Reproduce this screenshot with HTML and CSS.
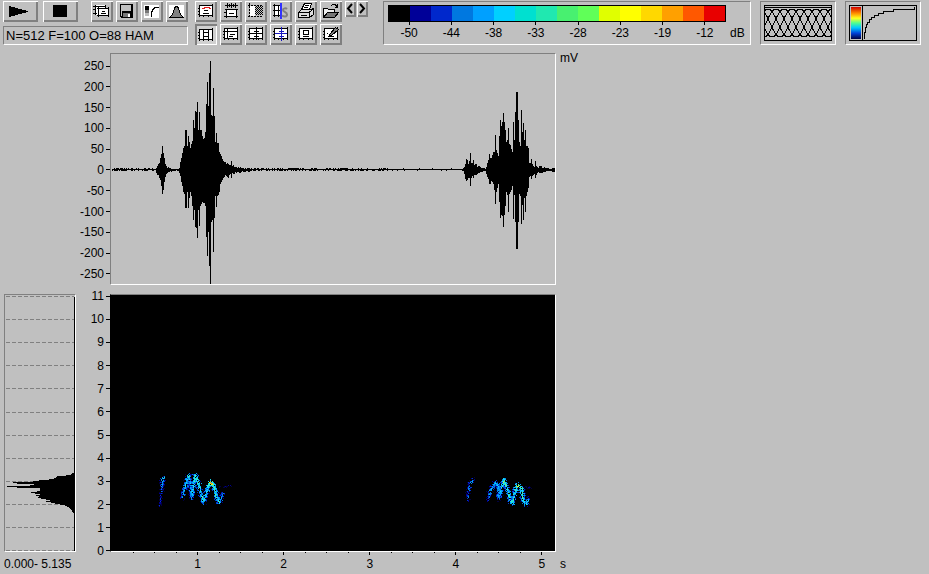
FILE: index.html
```html
<!DOCTYPE html>
<html lang="en">
<head>
<meta charset="utf-8">
<title>Sound analysis</title>
<link rel="stylesheet" href="styles.css">
</head>
<body>
<svg class="defs" aria-hidden="true">
  <defs>
    <g id="frame">
      <path d="M5 4h12v11H5z" fill="#fff"/>
      <path d="M4.500 4v12M17.500 3v13M4 4.500h14M4 14.500h14M3 7.500h1M3 10.500h1M3 13.500h1M8.500 15v1M13.500 15v1" stroke="#000" fill="none"/>
    </g>
  </defs>
</svg>

<header class="toolbar">
  <div class="left">
    <div class="row">
      <button class="wide" aria-label="Play"><svg viewBox="0 0 35 21"><path d="M6 5l19 5v1L6 16z"/></svg></button>
      <button class="wide" aria-label="Stop"><svg viewBox="0 0 35 21"><path d="M10 4h14v12H10z"/></svg></button>
      <div class="row files">
        <button aria-label="Copy"><svg viewBox="0 0 22 21"><path d="M4 4h11v10H4z" fill="#fff"/><path d="M2 5.500h13M4.500 4v10M2 8.500h2M2 12.500h4M14.500 4v3" class="k"/><path d="M7 7h11v8H7z" fill="#fff"/><path d="M6 7.500h12M7.500 6v10M6 14.500h12M17.500 6v10M10 12.500h5M11 10.500h3" class="k"/></svg></button>
        <button aria-label="Save"><svg viewBox="0 0 22 21"><path d="M4 3h13v14H5l-1-1z"/><path d="M6 4h9v6H6zM5 4h1v11H5z" fill="#c0c0c0"/><path d="M7 12h7v4H7z" fill="#777"/><path d="M12 13h2v3h-2z" fill="#fff"/></svg></button>
        <button aria-label="Transfer curve"><svg viewBox="0 0 22 21"><path d="M3 4h15v13H3z" fill="#fff"/><path d="M4 5h4v4H4z"/><path d="M4 9h4v3H4z" fill="#777"/><path d="M4 12h4v3H4z" fill="#bbb"/><path d="M10.500 16v-4l1-3 2-2 4-1" class="k"/></svg></button>
        <button aria-label="Window function"><svg viewBox="0 0 22 21"><path d="M3 4h15v13H3z" fill="#fff"/><path d="M3.500 16.500l3-3 2-6 1-2h2l1 2 2 6 3 3z" fill="#808080" stroke="#000"/></svg></button>
      </div>
    </div>
    <p class="status">N=512 F=100 O=88 HAM</p>
  </div>

  <div class="tools">
    <div class="row">
      <button aria-label="Spectrogram"><svg viewBox="0 0 22 21"><use href="#frame"/><path d="M7 7.500h2v-1h5v1h2" stroke="#e02020" fill="none"/><path d="M9 9.500h4M8 12.500h6" class="k"/></svg></button>
      <button aria-label="Waveform"><svg viewBox="0 0 22 21"><path d="M5 4.500h13M7.500 2v5M9.500 3v3M11.500 2v5M13.500 3v3M15.500 2v5" class="k"/><path d="M6 8h11v8H6z" fill="#fff"/><path d="M5 8.500h13M6.500 8v9M16.500 8v9M4 15.500h14M9 12.500h5M4 11.500h2" class="k"/></svg></button>
      <button aria-label="Selection"><svg viewBox="0 0 22 21"><path d="M5 5h5v10H5z" fill="#fff"/><path d="M3 4.500h15M4.500 2v15M3 15.500h15" class="k" stroke-dasharray="2 1"/><path d="M10 5h8v9h-8z" fill="url(#hatch)"/><defs><pattern id="hatch" width="2" height="2" patternUnits="userSpaceOnUse"><path d="M0 0h2v2H0z" fill="#c0c0c0"/><path d="M0 0h1v1H0zM1 1h1v1H1z"/></pattern></defs></svg></button>
      <button aria-label="Spectrum cursor"><svg viewBox="0 0 22 21"><path d="M4 4h7v11H4z" fill="#fff"/><path d="M3 4.500h8M4.500 3v13M3 9.500h8M3 14.500h8M8.500 4v12" class="k"/><path d="M11 2v16" stroke="#3030ff" stroke-width="2" fill="none"/><path d="M17 8c-1-1-4-1-4 1s4 2 4 4.500-3 2.500-5 1" stroke="#808080" stroke-width="2" fill="none" class="smooth"/></svg></button>
      <button aria-label="Print"><svg viewBox="0 0 22 21"><path d="M6.500 8.500l3-6h7l-2 6z" fill="#fff" stroke="#000"/><path d="M10 4.500h4M9 6.500h4" class="k"/><path d="M3.500 11.500l3-3h9l3-1v6l-4 3h-11z" fill="#ddd" stroke="#000"/><path d="M4 11.500h10l4-3M14.500 12v5M6 14.500h6" class="k"/></svg></button>
      <button aria-label="Open"><svg viewBox="0 0 22 21"><path d="M3.500 16.500v-9h4l1 1h6v3" fill="#eee" stroke="#000"/><path d="M3.500 16.500l4-5h11l-4 5z" fill="#777" stroke="#000"/><path d="M11 4.500l2-1h2l2 2M17.500 3v3h-3" class="k"/></svg></button>
      <button class="step first" aria-label="Previous"><svg viewBox="0 0 11 16"><path d="M7 3L3 7.500 7 12" class="arrow"/></svg></button>
      <button class="step" aria-label="Next"><svg viewBox="0 0 11 16"><path d="M3 3l4 4.500L3 12" class="arrow"/></svg></button>
    </div>
    <div class="row">
      <button class="pressed" aria-label="Vertical cursors" aria-pressed="true"><svg viewBox="0 0 22 21"><g transform="translate(0 1)"><use href="#frame"/><path d="M8.500 4v11M13.500 4v11M9 7.500h4M9 11.500h4" class="k"/></g></svg></button>
      <button aria-label="Horizontal cursor"><svg viewBox="0 0 22 21"><use href="#frame"/><path d="M5 7.500h13M7.500 4v11M10 10.500h5M9 12.500h4" class="k"/></svg></button>
      <button aria-label="Cross cursor"><svg viewBox="0 0 22 21"><use href="#frame"/><path d="M5 9.500h12M11.500 3v13M9 7.500h5M9 12.500h5" class="k"/></svg></button>
      <button aria-label="Harmonic cursor"><svg viewBox="0 0 22 21"><use href="#frame"/><path d="M5 9.500h12M11.500 3v14M9 7.500h5M9 12.500h5" stroke="#1818c0" fill="none"/></svg></button>
      <button aria-label="Box cursor"><svg viewBox="0 0 22 21"><use href="#frame"/><path d="M8.500 6.500h5v4h-5zM8 12.500h6" class="k"/></svg></button>
      <button aria-label="Draw"><svg viewBox="0 0 22 21"><use href="#frame"/><path d="M9.500 10.500l6-7 3 2-7 6h-2z" fill="#808080" stroke="#000"/><path d="M7 9.500h1M8 12.500h6" class="k"/></svg></button>
    </div>
  </div>

  <section class="panel scale" aria-label="Level scale">
    <div class="colors">
      <i class="c1"></i><i class="c2"></i><i class="c3"></i><i class="c4"></i><i class="c5"></i><i class="c6"></i><i class="c7"></i><i class="c8"></i><i class="c9"></i><i class="c10"></i><i class="c11"></i><i class="c12"></i><i class="c13"></i><i class="c14"></i><i class="c15"></i><i class="c16"></i>
    </div>
    <div class="levels"><span>-50</span><span>-44</span><span>-38</span><span>-33</span><span>-28</span><span>-23</span><span>-19</span><span>-12</span></div>
    <span class="unit">dB</span>
  </section>

  <div class="panel preview"><svg id="overlap" viewBox="0 0 68 36" role="img" aria-label="Window overlap"></svg></div>
  <div class="panel preview">
    <svg viewBox="0 0 68 36" role="img" aria-label="Color curve">
      <defs><linearGradient id="jet" x2="0" y2="1"><stop offset="0" stop-color="#d00000"/><stop offset=".2" stop-color="#ff9000"/><stop offset=".35" stop-color="#ffff20"/><stop offset=".5" stop-color="#50ff90"/><stop offset=".65" stop-color="#00c8ff"/><stop offset=".82" stop-color="#0040d8"/><stop offset="1" stop-color="#000040"/></linearGradient></defs>
      <path d="M2 2h10v32H2z" fill="url(#jet)"/>
      <path d="M13.500 1v34M15.500 34v-7h1v-5h1v-3h1v-2h2v-3h2v-2h3v-2h4v-2h5v-2h10v-2h21V2" class="k"/>
      <path d="M.5.5h67v35H.5z" class="k"/>
    </svg>
  </div>
</header>

<main class="charts">
  <div class="axis volts"><span>250</span><span>200</span><span>150</span><span>100</span><span>50</span><span>0</span><span>-50</span><span>-100</span><span>-150</span><span>-200</span><span>-250</span></div>
  <div class="plot wave"><svg id="wave" viewBox="0 0 444 230" preserveAspectRatio="none" role="img" aria-label="Waveform"></svg></div>
  <span class="wave-unit">mV</span>

  <div class="plot spectrum"><svg id="spectrum" viewBox="0 0 70 256" preserveAspectRatio="none" role="img" aria-label="Mean spectrum"></svg></div>
  <div class="axis khz"><span>11</span><span>10</span><span>9</span><span>8</span><span>7</span><span>6</span><span>5</span><span>4</span><span>3</span><span>2</span><span>1</span><span>0</span></div>
  <div class="plot sonogram"><svg id="sonogram" viewBox="0 0 444 256" preserveAspectRatio="none" role="img" aria-label="Spectrogram"></svg></div>

  <span class="range">0.000- 5.135</span>
  <div class="time">
    <svg id="ticks" viewBox="0 0 446 4" preserveAspectRatio="none" aria-hidden="true"></svg>
    <div class="seconds"><span>1</span><span>2</span><span>3</span><span>4</span><span>5</span></div>
  </div>
  <span class="time-unit">s</span>
</main>
<script src="charts.js"></script>
</body>
</html>
```
FILE: styles.css
```css
* { box-sizing: border-box; }
body {
  margin: 0;
  min-height: 100vh;
  display: flex;
  flex-direction: column;
  background: #c0c0c0;
  color: #000;
  font: 12px/16px "Liberation Sans", Arial, sans-serif;
}
svg { display: block; shape-rendering: crispEdges; }
.defs { position: absolute; width: 0; height: 0; }
.k { fill: none; stroke: #000; }
.arrow { fill: none; stroke: #000; stroke-width: 2; shape-rendering: auto; }
.smooth { shape-rendering: auto; }

.toolbar { display: flex; align-items: flex-start; padding: 1px 8px 0 3px; }
.row { display: flex; gap: 3px; align-items: flex-start; }
.left { flex: 0 0 185px; margin-right: 7px; }
.left > .row { gap: 5px; }
.row.files { margin-left: auto; }
button {
  flex: none;
  width: 22px;
  height: 21px;
  padding: 0;
  border: 0;
  background: #c0c0c0;
  box-shadow: inset 1px 1px #fff, inset -2px -2px #808080;
}
button svg { width: 100%; height: 100%; }
.wide { width: 35px; }
.pressed { background: #d0d0d0; box-shadow: inset 2px 2px #808080, inset -1px -1px #fff; }
.step { width: 11px; height: 16px; }
.step + .step { margin-left: -2px; }
.status {
  height: 19px;
  margin: 4px 0 0;
  padding: 1px 2px;
  font-size: 13px;
  white-space: nowrap;
  border: 1px solid;
  border-color: #808080 #fff #fff #808080;
}
.tools { flex: none; margin-right: 15px; }
.tools .row + .row { margin-top: 2px; }
.tools .first + .step, .tools .row:first-child { margin-bottom: 0; }

.panel {
  height: 44px;
  border: 1px solid;
  border-color: #808080 #fff #fff #808080;
  padding: 3px;
}
.scale {
  flex: 1;
  min-width: 300px;
  display: grid;
  grid-template-columns: 1fr 24px;
  align-content: start;
  padding-left: 4px;
  padding-right: 0;
}
.colors { grid-column: 1; display: flex; height: 17px; border: 1px solid #000; }
.colors i { flex: 1; }
.c1 { background: #000; }
.c2 { background: #000098; }
.c3 { background: #0028cc; }
.c4 { background: #0078e0; }
.c5 { background: #00a0ff; }
.c6 { background: #00d0ff; }
.c7 { background: #00e0d0; }
.c8 { background: #20e8b0; }
.c9 { background: #48f070; }
.c10 { background: #60ff58; }
.c11 { background: #e0ff00; }
.c12 { background: #ffff00; }
.c13 { background: #ffd800; }
.c14 { background: #ffa000; }
.c15 { background: #ff5800; }
.c16 { background: #e80000; }
.levels { grid-column: 1; display: grid; grid-template-columns: repeat(8, 1fr); text-align: center; }
.levels span::before { content: ""; display: block; width: 1px; height: 3px; margin: 0 auto; background: #000; }
.unit { align-self: end; padding-left: 4px; }
.preview { flex: 0 0 76px; margin-left: 9px; }
.preview svg { width: 100%; height: 36px; }

.charts {
  flex: 1;
  display: grid;
  grid-template-columns: 72px 34px minmax(0, 446fr) minmax(0, 369fr);
  grid-template-rows: minmax(200px, 232fr) minmax(220px, 258fr) 22px;
  row-gap: 9px;
  padding: 8px 4px 0;
}
.plot { min-height: 0; border: 1px solid; border-color: #808080 #fff #fff #808080; }
.plot svg { width: 100%; height: 100%; }
.wave, .sonogram, .time { grid-column: 3; }
.axis { grid-column: 2; display: flex; flex-direction: column; justify-content: space-between; }
.axis span { display: flex; justify-content: flex-end; align-items: center; gap: 2px; height: 16px; }
.axis span::after { content: ""; width: 4px; height: 1px; background: #000; }
.volts { padding: 5px 0 3px; }
.khz { margin: -6px 0 -7px; }
.sonogram { background: #000; border-left-color: #000; }
.wave-unit { padding: 0 4px; margin-top: -3px; }
.spectrum { grid-column: 1; }
.range, .time, .time-unit { margin-top: -9px; }
.range { grid-column: 1; padding-top: 4px; white-space: nowrap; }
.time svg { width: 100%; height: 4px; }
.seconds { display: grid; grid-template-columns: 10% repeat(5, 19.3%); text-align: center; }
.seconds span:first-child { grid-column: 2; }
.time-unit { padding: 4px 4px 0; }
```
FILE: charts.js
```js
const NS = 'http://www.w3.org/2000/svg';
function add(parent, name, attrs) {
  const el = document.createElementNS(NS, name);
  for (const key in attrs) el.setAttribute(key, attrs[key]);
  parent.appendChild(el);
  return el;
}
const byId = id => document.getElementById(id);
let seed = 7;
function random() {
  seed = (seed * 16807) % 2147483647;
  return seed / 2147483647;
}

// Waveform: peak heights above and below the centre line, one pair per column.
const bursts = [
  [45, '2 3,4 5,6 5,7 8,12 10,16 16,24 24,17 20,12 12,6 7,4 4,2 3,3 2,2 2,2 1,1 2'],
  [68, '2 3,8 6,12 12,17 16,22 22,24 24,40 38,40 38,24 22,34 38,28 28,22 22,26 26,29 36,50 50,42 40,59 57,58 58,68 68,40 40,58 56,40 36,40 34,34 32,31 33,32 33,38 36,66 67,88 86,64 62,97 96,109 115,55 52,54 50,82 82,54 48,28 26,37 37,27 26,27 25,18 22,16 14,14 12,11 10,9 8,8 7,8 5,6 6,7 7,6 8,5 5,5 4,9 8,4 3,5 4,3 4,3 2,3 3,2 2,3 2,2 3,3 3,2 2,2 1,2 2,1 2,2 2,1 1,2 1,2 2,1 2'],
  [352, '2 1,3 4,6 9,11 11,10 10,6 8,9 8,17 16,7 8,7 6,10 8,5 5,6 5,6 5,3 4,4 3,4 3,3 2,2 2,2 2,1 1,1 1,1 1,3 4,7 7,10 9,16 14,12 14,12 11,15 12,18 14,18 20,35 34,20 22,17 18,14 14,34 32,50 48,44 45,48 46,57 57,48 45,40 36,28 22,30 25,42 42,26 24,25 22,21 20,18 16,48 49,30 25,58 52,78 79,78 79,50 52,28 24,24 26,60 54,38 35,47 50,30 28,40 42,24 26,24 22,22 18,7 7,7 6,11 9,6 6,4 5,3 4,9 8,4 5,3 3,2 2,4 3,4 3,4 3,2 3,2 2,3 2,2 2,1 1,1 1,2 1,1 1,1 1,1 1,2 2,2 2,2 2']
];
let path = '';
const mid = 115.5;
for (let x = 0; x < 442; x++) {
  const quiet = x > 275 && x < 350;
  const up = random() > (quiet ? 0.96 : 0.65) ? 1 : 0;
  const down = random() > (quiet ? 0.9 : 0.45) ? 1 : 0;
  path += `M${x + 1.5} ${mid - up - 0.5}V${mid + down + 0.5}`;
}
for (const [start, data] of bursts) {
  data.split(',').forEach((pair, i) => {
    const [up, down] = pair.split(' ').map(Number);
    path += `M${start + i + 0.5} ${mid - up}V${Math.min(230, mid + down)}`;
  });
}
add(byId('wave'), 'path', { d: path, stroke: '#000', fill: 'none' });

// Mean spectrum, one row per line growing leftwards from the frequency axis.
const spectrum = byId('spectrum');
for (let k = 0; k < 12; k++) {
  const y = Math.round(1 + k * 23.1) + 0.5;
  add(spectrum, 'path', { d: `M1 ${y}H69`, stroke: '#808080', 'stroke-dasharray': '4 2' });
}
const rows = [1, 1, 3, 4, 9, 18, 19, 21, 26, 36, 42, 62, 58, 41, 45, 68, 58, 35, 35, 35, 38, 44, 40, 35, 39, 36, 37, 34, 29, 25, 29, 24, 20, 15, 10, 8, 6, 5, 4, 3, 3, 2, 1];
add(spectrum, 'path', { d: rows.map((n, i) => `M70 ${176.5 + i}H${70 - n}`).join(''), stroke: '#000' });
add(spectrum, 'path', { d: 'M69.5 2V256', stroke: '#000' });

// Spectrogram calls: traces of [x, y, level] with scattered cells around them.
const traces = [
  [[52.3, 182, 5], [51, 190, 2.5], [50, 202, 1.5], [49, 211, 1]],
  [[71, 203, 3], [73.5, 194, 4], [76, 184, 5], [78, 180, 5], [79, 189, 4], [81, 202, 4], [82, 191, 5], [84.5, 180, 6], [86.5, 185, 6], [89, 194, 5], [92.5, 206, 5], [96, 196, 5], [98, 188, 6], [100, 187, 8], [103, 190, 6], [105, 200, 5], [108, 207, 5], [112, 198, 3]],
  [[362, 184, 3], [359, 188, 3], [357, 197, 2], [357, 205, 2]],
  [[377, 205, 2], [380, 194, 4], [384, 187, 4], [387, 190, 4], [388, 203, 4], [391, 190, 5], [393, 185, 6], [396, 193, 5], [400, 206, 5], [402, 208, 5], [404, 196, 5], [406, 190, 7], [410, 192, 6], [412, 204, 5], [415, 209, 5], [418, 203, 3]],
  [[108, 192, 0.3], [121, 190, 0.4]],
  [[408, 192, 0.3], [421, 192, 0.3]]
];
const palette = ['#000040', '#000090', '#0038d0', '#0080e8', '#00a8ff', '#18dcf0', '#50f0a0', '#d8f028', '#ff7010'];
const cells = new Map();
for (const trace of traces) {
  for (let i = 1; i < trace.length; i++) {
    const [x1, y1, a] = trace[i - 1];
    const [x2, y2, b] = trace[i];
    const count = Math.hypot(x2 - x1, y2 - y1) * 7;
    for (let n = 0; n < count; n++) {
      const t = n / count;
      const dx = (random() + random() - 1) * 3.4;
      const dy = (random() + random() - 1) * 4;
      const level = Math.round(a + (b - a) * t - (Math.abs(dx) + Math.abs(dy)) * 1.1 + random() * 1.5);
      if (level < 0) continue;
      const key = Math.round(x1 + (x2 - x1) * t + dx - 0.5) + ' ' + Math.round(y1 + (y2 - y1) * t + dy);
      cells.set(key, Math.max(cells.get(key) || 0, Math.min(8, level)));
    }
  }
}
for (const [key, level] of cells) {
  const [x, y] = key.split(' ');
  add(byId('sonogram'), 'rect', { x, y, width: 1, height: 1, fill: palette[level] });
}

// Time ticks, four per second.
for (let i = 1; i <= 20; i++) {
  const x = Math.round(1 + i * 21.5) + 0.5;
  add(byId('ticks'), 'path', { d: `M${x} 0V${i % 4 ? 1 : 3}`, stroke: '#000' });
}

// Overlapping analysis windows.
const overlap = byId('overlap');
for (let k = 0; k < 5; k++) {
  let d = '';
  for (let x = 1; x <= 67; x++) {
    const y = 18 + 14 * Math.cos((x + k * 8) * Math.PI / 20);
    d += (d ? 'L' : 'M') + x + ' ' + y.toFixed(1);
  }
  add(overlap, 'path', { d, class: 'k' });
}
add(overlap, 'path', { d: 'M.5.5h67v35H.5zM1 2.500h66', class: 'k' });
```
